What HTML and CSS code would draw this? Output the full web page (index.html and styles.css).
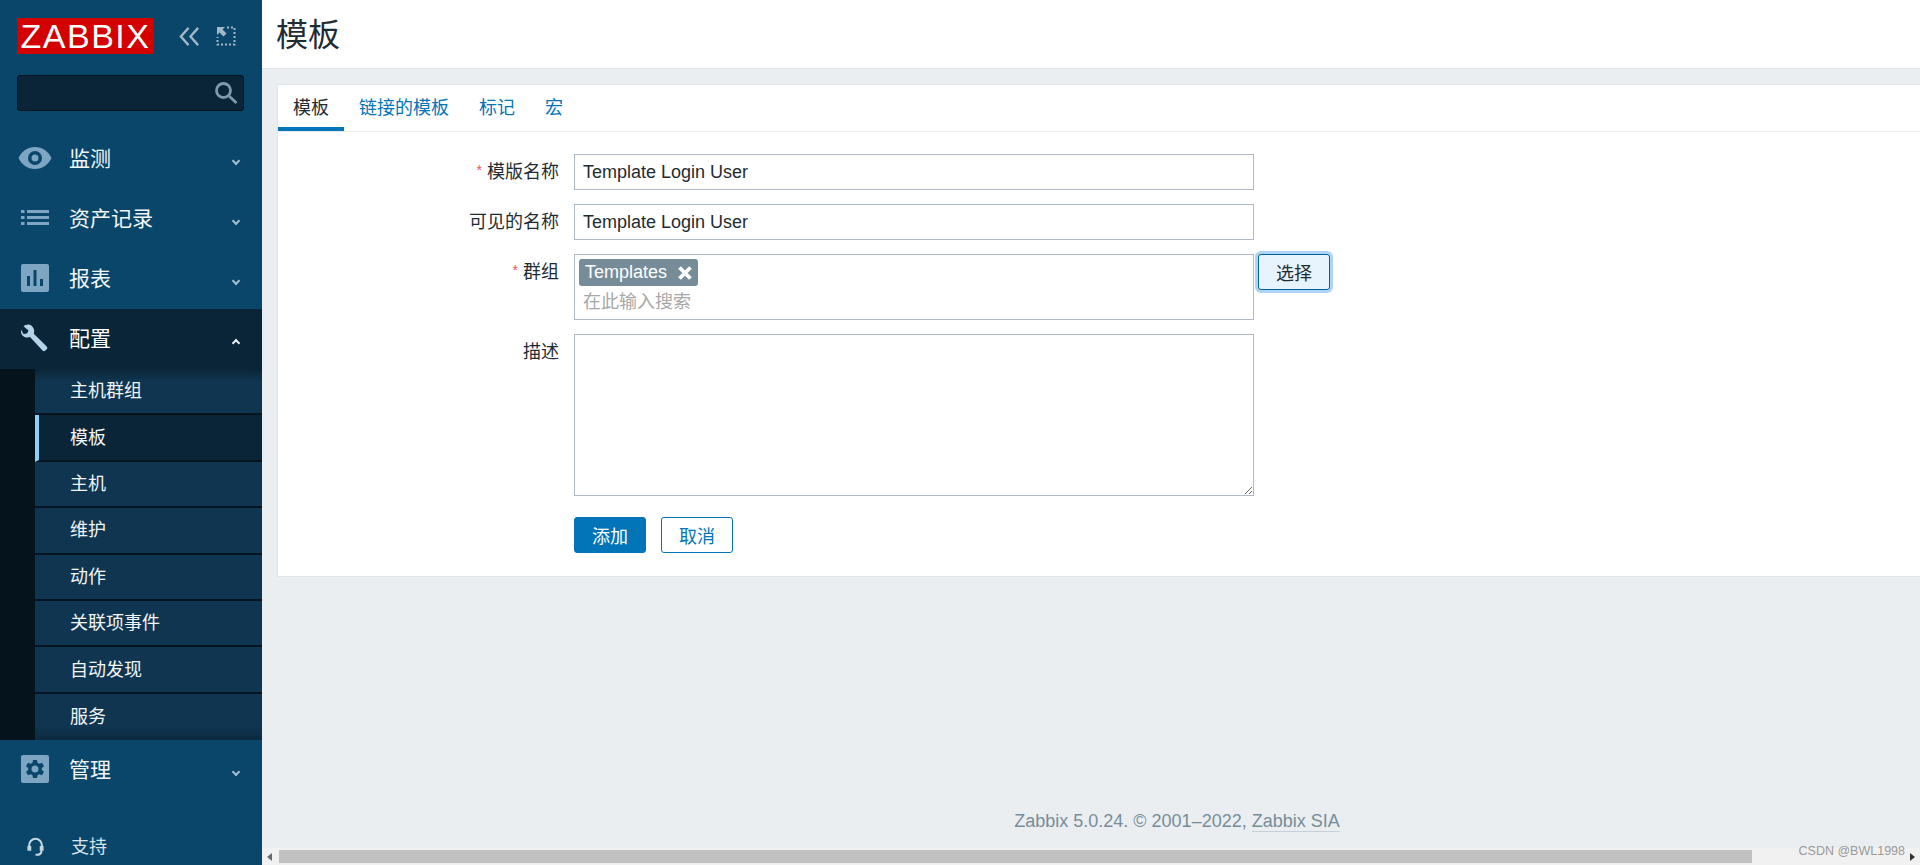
FILE: index.html
```html
<!DOCTYPE html>
<html lang="zh-CN">

<head>
  <meta charset="UTF-8">
  <title>模板</title>
  <link rel="stylesheet" href="styles.css">
</head>

<body>

  <aside class="sidebar">
    <div class="brand">
      <div class="logo">ZABBIX</div>
      <svg class="brand-btn collapse" viewBox="0 0 24 24"><path d="M11 3 3 12l8 9M21 3l-8 9 8 9" /></svg>
      <svg class="brand-btn expand" viewBox="0 0 20 20">
        <path class="dots" d="M11 1.500H18.500V18.500H1.500V11" />
        <path class="arrow" d="M1 1h8L6.500 3.500 10.500 7.500 7.500 10.500 3.500 6.500 1 9z" />
      </svg>
    </div>
    <div class="search">
      <svg viewBox="0 0 24 24"><circle cx="9.500" cy="9.500" r="7" /><path d="m15 15 7.500 7" /></svg>
    </div>

    <nav class="menu">
      <a class="menu-item">
        <svg class="menu-icon" viewBox="0 0 34 28"><path class="fill" d="M17 3C9.500 3 3.500 7.500 0.500 14c3 6.500 9 11 16.500 11s13.500-4.500 16.500-11C30.500 7.500 24.500 3 17 3zm0 18a7 7 0 1 1 0-14 7 7 0 0 1 0 14zm0-3.500a3.500 3.500 0 1 0 0-7 3.500 3.500 0 0 0 0 7z" /></svg>
        <span>监测</span><i class="chev"></i>
      </a>
      <a class="menu-item">
        <svg class="menu-icon" viewBox="-3 -6 34 28"><path class="fill" d="M0 0h3.500v3H0zM6 0h22v3H6zM0 6h3.500v3H0zM6 6h22v3H6zM0 12h3.500v3H0zM6 12h22v3H6z" /></svg>
        <span>资产记录</span><i class="chev"></i>
      </a>
      <a class="menu-item">
        <svg class="menu-icon" viewBox="0 0 28 28"><path class="fill" fill-rule="evenodd" d="M2 0h24a2 2 0 0 1 2 2v24a2 2 0 0 1-2 2H2a2 2 0 0 1-2-2V2a2 2 0 0 1 2-2zm4 12v10h3V12zm6.500-6v16h3V6zM19 15v7h3v-7z" /></svg>
        <span>报表</span><i class="chev"></i>
      </a>

      <a class="menu-item open">
        <svg class="menu-icon" viewBox="0 0 28 28"><path class="fill" d="M7.500 0.500c-2 0-3.800.7-5 1.800l5 4.200-1.500 3-3.500.5L0 5.500C-.5 9 .8 12 4 13.200c1.800.6 3.600.5 5-.1L21.500 26.500c.8.900 2 .9 2.800.1l1.400-1.400c.8-.8.800-2 0-2.800L12.800 9.800c.7-1.800.5-4-.5-5.700C11.400 2 9.500.5 7.500.5z" /></svg>
        <span>配置</span><i class="chev up"></i>
      </a>
      <ul class="submenu">
        <li>主机群组</li>
        <li class="active">模板</li>
        <li>主机</li>
        <li>维护</li>
        <li>动作</li>
        <li>关联项事件</li>
        <li>自动发现</li>
        <li>服务</li>
      </ul>

      <a class="menu-item">
        <svg class="menu-icon" viewBox="0 0 28 28"><path class="fill" fill-rule="evenodd" d="M2 0h24a2 2 0 0 1 2 2v24a2 2 0 0 1-2 2H2a2 2 0 0 1-2-2V2a2 2 0 0 1 2-2zm10 5-.5 2.800-1.800 1-2.700-1-2 3.400 2.200 1.800v2l-2.200 1.800 2 3.400 2.700-1 1.800 1 .5 2.800h4l.5-2.800 1.800-1 2.700 1 2-3.400-2.200-1.800v-2l2.200-1.800-2-3.400-2.700 1-1.800-1L16 5zm2 5.500a3.500 3.500 0 1 1 0 7 3.500 3.500 0 0 1 0-7z" /></svg>
        <span>管理</span><i class="chev"></i>
      </a>
    </nav>

    <a class="support">
      <svg viewBox="0 0 20 22"><path d="M2.500 14V9.500a7.500 7.500 0 0 1 15 0V14" /><path class="pad" d="M0.500 10.500h4.500V16H0.500zM15 10.500h4.500V16H15zM10 19.500h4.500V22H10z" /><path d="M17 15.500c0 3-1.500 5-4 5" /></svg>
      <span>支持</span>
    </a>
  </aside>

  <div class="main">
    <header class="page-header">
      <h1>模板</h1>
    </header>

    <section class="card">
      <ul class="tabs">
        <li class="current">模板</li>
        <li>链接的模板</li>
        <li>标记</li>
        <li>宏</li>
      </ul>

      <form class="form">
        <label class="required">模版名称</label>
        <input class="field" type="text" value="Template Login User">

        <label>可见的名称</label>
        <input class="field" type="text" value="Template Login User">

        <label class="required">群组</label>
        <div class="group-row">
          <div class="multiselect">
            <span class="tag">Templates
              <svg viewBox="0 0 14 14"><path d="M1.500 1.500l11 11M12.500 1.500l-11 11" /></svg>
            </span>
            <div class="hint">在此输入搜索</div>
          </div>
          <button class="btn-select" type="button">选择</button>
        </div>

        <label>描述</label>
        <textarea class="descr"></textarea>

        <div class="actions">
          <button class="btn-add" type="button">添加</button>
          <button class="btn-cancel" type="button">取消</button>
        </div>
      </form>
    </section>

    <footer class="footer">
      Zabbix 5.0.24. © 2001–2022, <a>Zabbix SIA</a>
    </footer>

    <div class="hscroll">
      <i class="arr left"></i>
      <div class="thumb"></div>
      <i class="arr right"></i>
    </div>
  </div>

  <div class="watermark">CSDN @BWL1998</div>

</body>

</html>
```

FILE: styles.css
```css
:root {
  --side-bg: #0a466a;
  --side-dark: #0a2537;
  --sub-bg: #0f3550;
  --sub-line: #05141e;
  --icon: #7ea6c2;
  --blue: #0275b8;
  --line: #acbbc7;
  --text: #1f2c33;
  --font-family: "Liberation Sans", "Noto Sans CJK SC", sans-serif;
}

* {
  margin: 0;
  padding: 0;
  box-sizing: border-box;
}

html,
body {
  height: 100%;
  overflow: hidden;
}

body {
  display: flex;
  background: #ebeef0;
  font-family: var(--font-family);
  font-size: 18px;
  color: var(--text);
}

/* sidebar */

.sidebar {
  width: 262px;
  flex: none;
  background: var(--side-bg);
  color: #f2f6f9;
}

.brand {
  display: flex;
  align-items: center;
  height: 75px;
  padding: 18px 0 21px 17px;
}

.logo {
  width: 137px;
  height: 36px;
  background: #d40000;
  color: #fff;
  font-size: 34px;
  line-height: 36px;
  letter-spacing: 1.5px;
  text-align: center;
}

.brand-btn {
  fill: none;
  stroke: #a3b8c7;
}

.collapse {
  width: 23px;
  height: 23px;
  margin-left: 24px;
  stroke-width: 2.400;
}

.expand {
  width: 20px;
  height: 20px;
  margin-left: 15px;
}

.expand .dots {
  stroke-width: 2;
  stroke-dasharray: 2 2;
}

.expand .arrow {
  fill: #a3b8c7;
  stroke: none;
}

.search {
  display: flex;
  align-items: center;
  justify-content: flex-end;
  width: 227px;
  height: 36px;
  margin-left: 17px;
  padding-right: 5px;
  background: var(--side-dark);
  border: 1px solid #04131c;
  border-radius: 3px;
}

.search svg {
  width: 24px;
  height: 24px;
  fill: none;
  stroke: #7d99ac;
  stroke-width: 2.800;
}

.menu {
  margin-top: 18px;
}

.menu-item {
  display: flex;
  align-items: center;
  height: 60px;
  font-size: 21px;
}

.menu-item span {
  margin-left: 17px;
  padding-bottom: 4px;
}

.menu-icon {
  flex: none;
  width: 34px;
  height: 28px;
  margin: 0 0 3px 18px;
}

.menu-icon .fill {
  fill: var(--icon);
}

.menu-item.open {
  background: var(--side-dark);
  color: #fff;
}

.menu-item.open .fill {
  fill: #b5d3e8;
}

.chev {
  width: 6px;
  height: 6px;
  margin: 0 23px 0 auto;
  border-right: 2px solid #a3bccd;
  border-bottom: 2px solid #a3bccd;
  transform: translateY(2px) rotate(45deg);
}

.chev.up {
  border-color: #e6eef3;
  transform: translateY(4px) rotate(225deg);
}

.submenu {
  list-style: none;
  height: 371px;
  padding-left: 35px;
  background: #04131c;
}

.submenu li {
  height: 46.400px;
  padding: 0 0 4px 35px;
  display: flex;
  align-items: center;
  background: var(--sub-bg);
  border-bottom: 2px solid var(--sub-line);
}

.submenu li:first-child {
  background: linear-gradient(#0a2537, var(--sub-bg) 12px);
}

.submenu li:last-child {
  border-bottom: 0;
  background: linear-gradient(var(--sub-bg) 70%, #0c2a40);
}

.submenu li.active {
  background: var(--side-dark);
  border-left: 4px solid #8fd0fb;
  padding-left: 31px;
}

.support {
  display: flex;
  align-items: center;
  height: 36px;
  margin-top: 28px;
  padding-left: 27px;
  color: #d7e3eb;
}

.support span {
  padding-bottom: 2px;
}

.support svg {
  width: 17px;
  height: 19px;
  margin-right: 27px;
  fill: none;
  stroke: #c4d6e2;
  stroke-width: 2.400;
}

.support .pad {
  fill: #c4d6e2;
  stroke: none;
}

/* main column */

.main {
  flex: 1;
  min-width: 0;
  display: flex;
  flex-direction: column;
}

.page-header {
  height: 69px;
  flex: none;
  padding-left: 14px;
  background: #fff;
  border-bottom: 1px solid #dfe4e7;
}

h1 {
  font-size: 32px;
  font-weight: normal;
  line-height: 70px;
}

.card {
  flex: none;
  height: 493px;
  margin: 15px 0 0 15px;
  background: #fff;
  border: 1px solid #dfe4e7;
  border-right: 0;
}

.tabs {
  display: flex;
  list-style: none;
  height: 47px;
  border-bottom: 1px solid #ebeef0;
  color: var(--blue);
}

.tabs li {
  height: 46px;
  padding: 0 15px;
  line-height: 46px;
}

.tabs li.current {
  color: var(--text);
  border-bottom: 4px solid var(--blue);
}

.form {
  display: grid;
  grid-template-columns: 281px 680px;
  column-gap: 15px;
  row-gap: 14px;
  padding-top: 22px;
}

.form label {
  height: 36px;
  line-height: 36px;
  text-align: right;
}

.required::before {
  content: "*";
  margin-right: 5px;
  font-size: 14px;
  line-height: 0;
  vertical-align: 3px;
  color: #e45959;
}

.field {
  height: 36px;
  padding: 0 8px;
  border: 1px solid var(--line);
  font: inherit;
  color: var(--text);
  outline: none;
}

.group-row {
  display: flex;
  align-items: flex-start;
  width: 760px;
}

.multiselect {
  width: 680px;
  height: 66px;
  padding: 4px;
  flex: none;
  border: 1px solid var(--line);
}

.tag {
  display: inline-flex;
  align-items: center;
  height: 27px;
  padding: 0 6px;
  background: #768d99;
  border-radius: 3px;
  color: #fff;
}

.tag svg {
  width: 14px;
  height: 14px;
  margin-left: 11px;
  fill: none;
  stroke: #fff;
  stroke-width: 3.800;
}

.hint {
  padding: 3px 4px 0;
  line-height: 26px;
  color: #a8a8a8;
}

button {
  height: 36px;
  border-radius: 3px;
  font: inherit;
}

.btn-select {
  width: 72px;
  margin-left: 4px;
  background: #e8f4fd;
  border: 1px solid #02649e;
  box-shadow: 0 0 0 3px #aed5f3;
  color: var(--text);
}

.descr {
  height: 162px;
  border: 1px solid var(--line);
  outline: none;
}

.actions {
  grid-column: 2;
  display: flex;
  gap: 15px;
  padding-top: 7px;
}

.actions button {
  width: 72px;
  border: 1px solid var(--blue);
}

.btn-add {
  background: var(--blue);
  color: #fff;
}

.btn-cancel {
  background: #fff;
  color: var(--blue);
}

.footer {
  margin-top: auto;
  padding: 0 0 15px 172px;
  text-align: center;
  color: #768d99;
  line-height: 24px;
}

.footer a {
  border-bottom: 1px solid #c5d0d8;
}

.hscroll {
  display: flex;
  align-items: center;
  height: 17px;
  flex: none;
  background: #f1f1f1;
}

.thumb {
  flex: none;
  width: 1473px;
  height: 13px;
  margin-left: 7px;
  background: #c1c1c1;
}

.arr {
  width: 0;
  height: 0;
  margin-left: 5px;
  border-top: 4px solid transparent;
  border-bottom: 4px solid transparent;
}

.arr.left {
  border-right: 5px solid #6a6a6a;
}

.arr.right {
  margin-left: auto;
  margin-right: 5px;
  border-left: 5px solid #333;
}

.watermark {
  position: absolute;
  right: 15px;
  bottom: 7px;
  font-size: 12.500px;
  color: #999;
}
```
